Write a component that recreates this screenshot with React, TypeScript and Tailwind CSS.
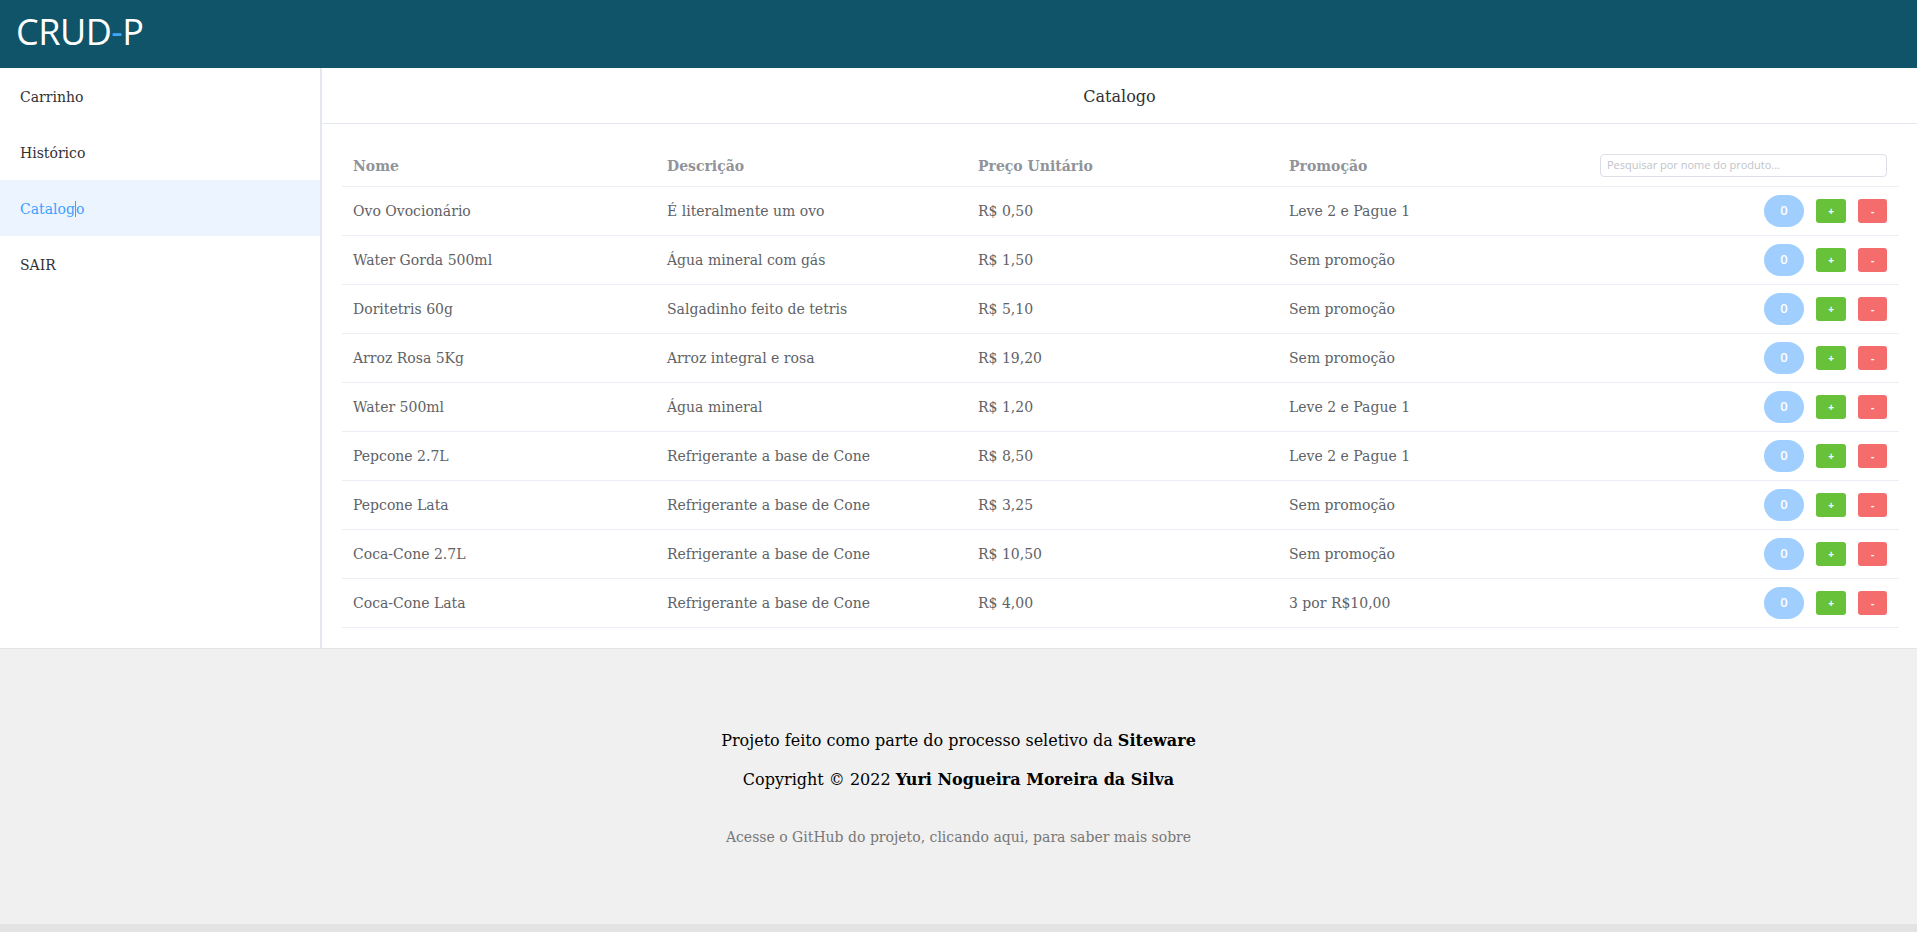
import React from "react";

const rows = [
  ["Ovo Ovocionário", "É literalmente um ovo", "R$ 0,50", "Leve 2 e Pague 1"],
  ["Water Gorda 500ml", "Água mineral com gás", "R$ 1,50", "Sem promoção"],
  ["Doritetris 60g", "Salgadinho feito de tetris", "R$ 5,10", "Sem promoção"],
  ["Arroz Rosa 5Kg", "Arroz integral e rosa", "R$ 19,20", "Sem promoção"],
  ["Water 500ml", "Água mineral", "R$ 1,20", "Leve 2 e Pague 1"],
  ["Pepcone 2.7L", "Refrigerante a base de Cone", "R$ 8,50", "Leve 2 e Pague 1"],
  ["Pepcone Lata", "Refrigerante a base de Cone", "R$ 3,25", "Sem promoção"],
  ["Coca-Cone 2.7L", "Refrigerante a base de Cone", "R$ 10,50", "Sem promoção"],
  ["Coca-Cone Lata", "Refrigerante a base de Cone", "R$ 4,00", "3 por R$10,00"],
];

const menu = ["Carrinho", "Histórico", "Catalogo", "SAIR"];

export default function App() {
  return (
    <div className="flex flex-col h-[932px] overflow-hidden font-['DejaVu_Serif',serif] bg-white">
      <header className="h-[68px] shrink-0 bg-[#0f5469] flex items-center pl-[16px] pb-[4px]">
        <span className="text-[36px] leading-none text-white font-['Open_Sans',sans-serif] tracking-[-0.5px]">
          CRUD<span className="text-[#3fa9f5]">-</span>P
        </span>
      </header>

      <div className="flex h-[580px] shrink-0">
        <aside className="w-[322px] shrink-0 border-r-2 border-[#e4e7ed] bg-white">
          {menu.map((m) => (
            <div
              key={m}
              className={
                m === "Catalogo"
                  ? "h-[56px] flex items-center pl-[20px] pt-[2px] text-[14px] text-[#409eff] bg-[#ecf5ff]"
                  : "h-[56px] flex items-center pl-[20px] pt-[2px] text-[14px] text-[#303133]"
              }
            >
              {m === "Catalogo" ? (
                <span>
                  Catalog
                  <span className="border-l border-[#409eff]">o</span>
                </span>
              ) : (
                m
              )}
            </div>
          ))}
        </aside>

        <main className="flex-1 flex flex-col min-w-0">
          <div className="h-[56px] shrink-0 border-b border-[#e4e7ed] flex items-center justify-center pt-[2px] text-[16px] text-[#303133]">
            Catalogo
          </div>
          <div className="pt-[20px] pl-[20px] pr-[18px]">
            <div className="grid grid-cols-[314px_311px_311px_311px_1fr] h-[43px] border-b border-[#ebeef5] items-center text-[14px] font-bold text-[#909399]">
              <div className="pl-[11px] pt-[2px]">Nome</div>
              <div className="pl-[11px] pt-[2px]">Descrição</div>
              <div className="pl-[11px] pt-[2px]">Preço Unitário</div>
              <div className="pl-[11px] pt-[2px]">Promoção</div>
              <div className="flex justify-end pr-[12px]">
                <div className="w-[287px] h-[23px] border border-[#dcdfe6] rounded-[4px] flex items-center pl-[6px] text-[11px] font-normal text-[#c0c4cc] font-['Open_Sans',sans-serif]">
                  Pesquisar por nome do produto...
                </div>
              </div>
            </div>
            {rows.map((r, i) => (
              <div
                key={i}
                className="grid grid-cols-[314px_311px_311px_311px_1fr] h-[49px] border-b border-[#ebeef5] items-center text-[14px] text-[#606266]"
              >
                <div className="pl-[11px] pt-[1px]">{r[0]}</div>
                <div className="pl-[11px] pt-[1px]">{r[1]}</div>
                <div className="pl-[11px] pt-[1px]">{r[2]}</div>
                <div className="pl-[11px] pt-[1px]">{r[3]}</div>
                <div className="flex justify-end items-center pr-[12px] gap-[12px] font-['Open_Sans',sans-serif]">
                  <div className="w-[40px] h-[32px] rounded-full bg-[#a0cfff] text-white text-[13px] font-semibold flex items-center justify-center">
                    0
                  </div>
                  <div className="w-[30px] h-[24px] rounded-[3px] bg-[#67c23a] text-white text-[10px] font-bold flex items-center justify-center">
                    +
                  </div>
                  <div className="w-[29px] h-[24px] rounded-[3px] bg-[#f56c6c] text-white text-[10px] font-bold flex items-center justify-center">
                    -
                  </div>
                </div>
              </div>
            ))}
          </div>
        </main>
      </div>

      <footer className="h-[276px] shrink-0 bg-[#f0f0f0] border-t border-[#e4e4e4] flex flex-col items-center pt-[80px]">
        <p className="text-[16px] leading-[24px] text-black">
          Projeto feito como parte do processo seletivo da <b>Siteware</b>
        </p>
        <p className="mt-[15px] text-[16px] leading-[24px] text-black">
          Copyright © 2022 <b>Yuri Nogueira Moreira da Silva</b>
        </p>
        <p className="mt-[35px] text-[14px] leading-[20px] text-[#777777]">
          Acesse o GitHub do projeto, clicando aqui, para saber mais sobre
        </p>
      </footer>
      <div className="h-[8px] shrink-0 bg-[#e3e3e3]" />
    </div>
  );
}
